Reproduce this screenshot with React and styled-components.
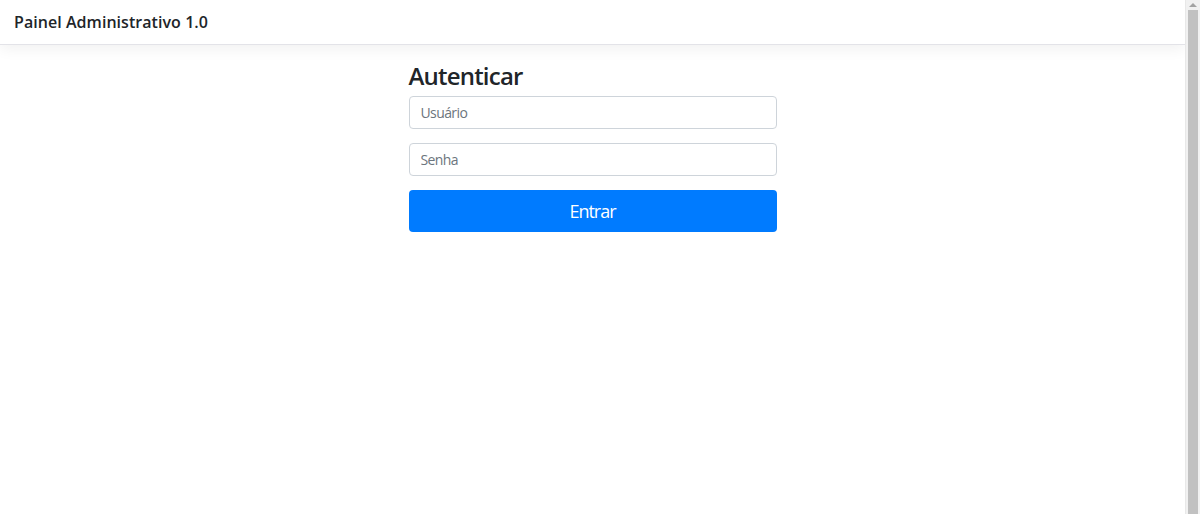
import React from "react";
import styled, { createGlobalStyle } from "styled-components";

const GlobalStyle = createGlobalStyle`
  html, body {
    margin: 0;
    padding: 0;
    background: #fff;
  }
  body {
    font-family: "Open Sans", "Noto Sans", sans-serif;
    color: #212529;
  }
  * {
    box-sizing: border-box;
  }
`;

const Shell = styled.div`
  height: 100vh;
  display: flex;
  overflow: hidden;
`;

const Content = styled.div`
  flex: 1;
  min-width: 0;
`;

const ScrollRail = styled.div`
  width: 15px;
  flex-shrink: 0;
  display: flex;
  flex-direction: column;
  background: #f1f1f1;
  border-left: 1px solid #e8e8e8;
`;

const ScrollArrow = styled.div`
  height: 10px;
  flex-shrink: 0;
  display: flex;
  align-items: center;
  justify-content: center;

  &::before {
    content: "";
    border-left: 4px solid transparent;
    border-right: 4px solid transparent;
    border-bottom: 4px solid #a3a3a3;
  }
`;

const ScrollThumb = styled.div`
  flex: 1 1 auto;
  min-height: 100px;
  margin: 0 2px 0 2px;
  background: #c1c1c1;
`;

const Navbar = styled.nav`
  height: 45px;
  display: flex;
  align-items: center;
  padding: 0 14px;
  background: #fff;
  border-bottom: 1px solid #e3e3e8;
  box-shadow: 0 4px 14px rgba(0, 0, 0, 0.06);
`;

const Brand = styled.span`
  font-size: 16px;
  font-weight: 600;
  color: #212529;
  letter-spacing: 0.05px;
`;

const Main = styled.main`
  display: flex;
  justify-content: center;
  padding-top: 14px;
`;

const LoginForm = styled.form`
  width: 368px;
  display: flex;
  flex-direction: column;
`;

const Title = styled.h3`
  margin: 0 0 3px;
  font-size: 24px;
  font-weight: 600;
  line-height: 34px;
  letter-spacing: -0.8px;
  color: #212529;
`;

const Input = styled.input`
  height: 33px;
  padding: 0 11px;
  margin-bottom: 14px;
  border: 1px solid #ced4da;
  border-radius: 4px;
  font-family: inherit;
  font-size: 14px;
  letter-spacing: -0.6px;
  color: #495057;
  background: #fff;
  outline: none;

  &::placeholder {
    color: #6c757d;
  }
`;

const Button = styled.button`
  height: 42px;
  border: none;
  border-radius: 4px;
  background: #007bff;
  color: #fff;
  font-family: inherit;
  font-size: 18px;
  letter-spacing: -1px;
  cursor: pointer;
`;

export default function App() {
  return (
    <>
      <GlobalStyle />
      <Shell>
        <Content>
          <Navbar>
            <Brand>Painel Administrativo 1.0</Brand>
          </Navbar>
          <Main>
            <LoginForm onSubmit={(e) => e.preventDefault()}>
              <Title>Autenticar</Title>
              <Input type="text" placeholder="Usuário" />
              <Input type="password" placeholder="Senha" />
              <Button type="submit">Entrar</Button>
            </LoginForm>
          </Main>
        </Content>
        <ScrollRail>
          <ScrollArrow />
          <ScrollThumb />
        </ScrollRail>
      </Shell>
    </>
  );
}
